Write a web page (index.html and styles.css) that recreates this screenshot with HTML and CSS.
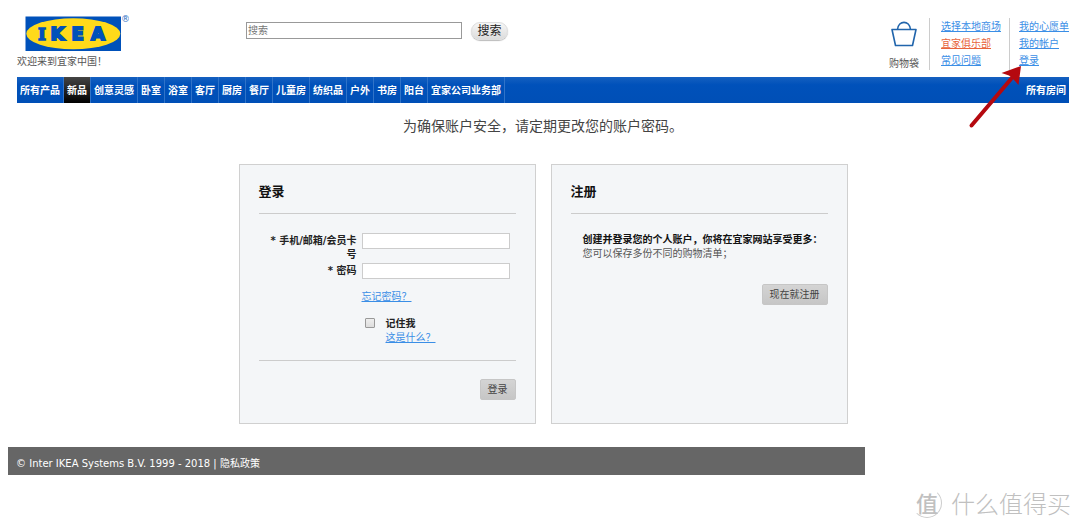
FILE: index.html
```html
<!DOCTYPE html>
<html lang="zh-CN">
<head>
<meta charset="utf-8">
<meta name="viewport" content="width=device-width, initial-scale=1">
<title>登录 - IKEA</title>
<link rel="stylesheet" href="styles.css">
</head>
<body>
<div class="page">
  <header class="header">
    <div class="brand">
      <a href="#" class="logo" aria-label="IKEA">
        <svg width="104" height="36" viewBox="0 0 104 36">
          <rect x="0.500" y="1.500" width="95.500" height="34.500" fill="#0051ba"/>
          <ellipse cx="48.300" cy="18.700" rx="47" ry="15.500" fill="#ffda1a"/>
          <text class="logo-text" x="13 25.500 46.500 66" y="25">I<tspan class="logo-sans">KEA</tspan></text>
          <text class="logo-mark" x="96" y="7">®</text>
        </svg>
      </a>
      <p class="welcome">欢迎来到宜家中国！</p>
    </div>
    <form class="search">
      <input class="search-input" type="text" placeholder="搜索" aria-label="搜索">
      <button class="search-button" type="button">搜索</button>
    </form>
    <div class="tools">
      <a href="#" class="bag">
        <svg width="26" height="26" viewBox="0 0 26 26" fill="none" stroke="#2165ac" stroke-width="1.6" stroke-linejoin="round">
          <path d="M1 8.500H25L21.500 24.500H4.500Z"/>
          <path d="M6.500 8.500C7.500 -1 18.500 -1 19.500 8.500"/>
        </svg>
        <span>购物袋</span>
      </a>
      <ul class="links">
        <li><a href="#">选择本地商场</a></li>
        <li><a href="#" class="club">宜家俱乐部</a></li>
        <li><a href="#">常见问题</a></li>
      </ul>
      <ul class="links account">
        <li><a href="#">我的心愿单</a></li>
        <li><a href="#">我的帐户</a></li>
        <li><a href="#">登录</a></li>
      </ul>
    </div>
    <svg class="arrow" width="56" height="64" viewBox="0 0 56 64">
      <path d="M3.500 60.500L43 14" stroke="#b5090f" stroke-width="4" stroke-linecap="round"/>
      <path d="M53 1L33.500 8L41 10.500L47 16L50.500 20Z" fill="#b5090f"/>
    </svg>
  </header>
  <nav class="nav">
    <a href="#">所有产品</a><a href="#" class="active">新品</a><a href="#">创意灵感</a><a href="#">卧室</a><a href="#">浴室</a><a href="#">客厅</a><a href="#">厨房</a><a href="#">餐厅</a><a href="#">儿童房</a><a href="#">纺织品</a><a href="#">户外</a><a href="#">书房</a><a href="#">阳台</a><a href="#">宜家公司业务部</a><a href="#" class="rooms">所有房间</a>
  </nav>
  <main>
    <p class="notice">为确保账户安全，请定期更改您的账户密码。</p>
    <div class="panels">
      <form class="panel">
        <h2>登录</h2>
        <div class="fields">
          <label for="user">* 手机/邮箱/会员卡号</label>
          <input class="field" id="user" type="text">
          <label for="pass">* 密码</label>
          <input class="field" id="pass" type="password">
          <a href="#" class="forgot">忘记密码？</a>
          <div class="remember">
            <input type="checkbox" id="remember">
            <div><label for="remember">记住我</label><a href="#">这是什么？</a></div>
          </div>
        </div>
        <div class="actions">
          <button class="button" type="button">登录</button>
        </div>
      </form>
      <section class="panel">
        <h2>注册</h2>
        <div class="benefits">
          <strong>创建并登录您的个人账户，你将在宜家网站享受更多：</strong>
          <p>您可以保存多份不同的购物清单；</p>
        </div>
        <div class="register">
          <button class="button" type="button">现在就注册</button>
        </div>
      </section>
    </div>
  </main>
</div>
<footer class="footer">© Inter IKEA Systems B.V. 1999 - 2018 | <a href="#">隐私政策</a></footer>
<div class="watermark">
  <span class="seal">值</span>
  <span>什么值得买</span>
</div>
</body>
</html>
```
FILE: styles.css
```css
* { box-sizing: border-box; }
body {
  margin: 0;
  background: #fff;
  color: #555;
  font: 10px/14px "DejaVu Sans", "Noto Sans CJK SC", sans-serif;
}
p, h2, ul { margin: 0; padding: 0; }
ul { list-style: none; }
a { color: #3a8ee6; }
button, input { font-family: inherit; margin: 0; }
.page { padding: 0 11px 0 17px; }

.header { position: relative; display: flex; height: 77px; }
.brand { flex: none; width: 229px; padding-top: 15px; }
.logo { display: block; height: 36px; padding-left: 8px; }
.logo svg { display: block; }
.logo-text {
  font: bold 17px "DejaVu Serif", serif;
  fill: #0051ba;
  stroke: #0051ba;
  stroke-width: 1.4px;
}
.logo-sans { font: bold 18px "DejaVu Sans", sans-serif; stroke-width: 2px; }
.logo-mark { font: 9px "DejaVu Sans", sans-serif; fill: #2a6fc4; }
.welcome { padding-top: 4px; }
.search { display: flex; align-items: flex-start; gap: 9px; padding-top: 22px; }
.search-input {
  width: 216px;
  height: 17px;
  padding: 0 1px;
  border: 1px solid #999;
  font-size: 10px;
  color: #555;
}
.search-input::placeholder { color: #777; }
.search-button {
  width: 37px;
  height: 18px;
  padding: 0;
  border: 1px solid #ddd;
  border-radius: 9px;
  background: linear-gradient(#f6f6f6, #dcdcdc);
  box-shadow: 0 1px 1px #bbb;
  font-size: 12px;
  line-height: 16px;
  color: #222;
}
.tools { display: flex; align-items: flex-start; margin-left: auto; padding-top: 18px; }
.bag {
  display: flex;
  flex-direction: column;
  align-items: center;
  gap: 10px;
  padding: 3px 10px 0 0;
  color: #555;
  text-decoration: none;
}
.links {
  height: 52px;
  padding: 0 8px 0 11px;
  border-left: 1px solid #ccc;
  line-height: 17px;
}
.links li { height: 17px; }
.account { padding-left: 9px; padding-right: 0; }
.links .club { color: #e8643c; }
.arrow { position: absolute; top: 65px; right: 45px; fill: none; z-index: 1; }

.nav {
  display: flex;
  height: 26px;
  background: linear-gradient(#1560c0, #0051ba 30%, #004fb6);
  line-height: 28px;
  font-weight: bold;
}
.nav a {
  padding: 0 3px;
  border-right: 1px solid #3073c8;
  color: #fff;
  text-decoration: none;
  white-space: nowrap;
}
.nav .active { background: linear-gradient(#444, #000); }
.nav .rooms { margin-left: auto; border: 0; }

.notice {
  padding: 13px 0 27px;
  text-align: center;
  font-size: 14px;
  line-height: 21px;
  color: #444;
}
.panels { display: flex; justify-content: center; gap: 15px; }
.panel {
  width: 297px;
  min-height: 260px;
  padding: 17px 19px 23px;
  border: 1px solid #d0d0d0;
  background: #f4f6f8;
}
.panel h2 {
  padding-bottom: 12px;
  border-bottom: 1px solid #ccc;
  font-size: 13px;
  line-height: 19px;
  color: #111;
}
.fields {
  display: grid;
  grid-template-columns: 98px 148px;
  column-gap: 5px;
  row-gap: 1px;
  padding: 19px 0 15px;
  border-bottom: 1px solid #ccc;
}
.fields label { padding: 1px 0 0 8px; color: #222; font-weight: bold; text-align: right; }
.field { width: 148px; height: 16px; padding: 0 2px; border: 1px solid #ccc; background: #fff; font-size: 10px; }
.forgot { grid-column: 2; padding-top: 10px; justify-self: start; }
.remember {
  grid-column: 2;
  display: flex;
  gap: 11px;
  padding: 12px 0 0 3px;
}
.remember input {
  appearance: none;
  width: 10px;
  height: 10px;
  margin-top: 1px;
  border: 1px solid #999;
  border-radius: 1px;
  background: linear-gradient(#eee, #ddd);
}
.remember input:checked { background: #3a8ee6; }
.remember a, .remember label { display: block; text-align: left; padding: 0; }
.actions { display: flex; justify-content: flex-end; padding-top: 18px; }
.button {
  height: 21px;
  padding: 0 7px;
  border: 1px solid #c6c6c6;
  border-radius: 2px;
  background: linear-gradient(#d4d4d4, #c6c6c6);
  font-size: 10px;
  line-height: 19px;
  color: #444;
}
.benefits { padding: 19px 0 0 12px; white-space: nowrap; }
.benefits strong { display: block; color: #111; }
.register { display: flex; justify-content: flex-end; padding-top: 23px; }

.footer {
  max-width: 857px;
  margin: 23px 0 0 8px;
  padding: 10px 8px 4px;
  background: #666;
  color: #fff;
}
.footer a { color: #fff; text-decoration: none; }
.watermark {
  display: flex;
  justify-content: flex-end;
  align-items: center;
  gap: 9px;
  padding: 12px 9px 0 0;
  font: 300 24px/32px "Noto Sans CJK SC", sans-serif;
  color: #c0c0c0;
}
.seal {
  width: 30px;
  height: 30px;
  border: 1px solid #ccc;
  border-color: transparent #ccc #ccc transparent;
  border-radius: 50%;
  font-size: 22px;
  font-weight: 500;
  line-height: 27px;
  text-align: center;
}
```
